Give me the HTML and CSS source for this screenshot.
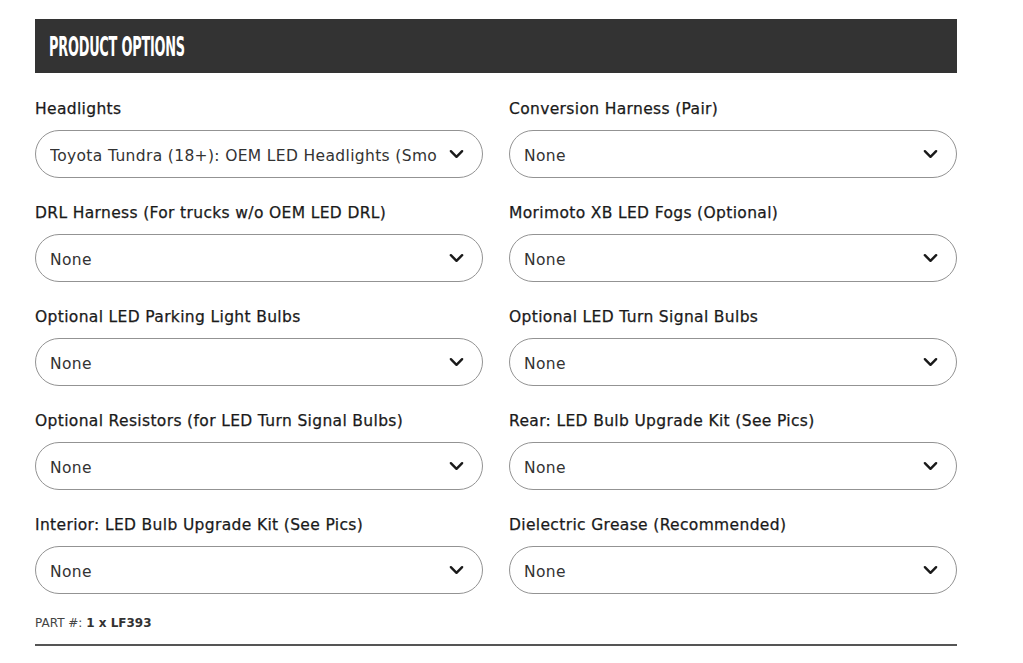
FILE: index.html
```
<!DOCTYPE html>
<html>
<head>
<meta charset="utf-8">
<link rel="stylesheet" href="styles.css">
</head>
<body>
<div class="wrap">
  <div class="header"><h2 class="title">PRODUCT OPTIONS</h2></div>
  <div class="grid">
    <div class="field"><div class="label">Headlights</div><div class="select"><span class="val">Toyota Tundra (18+): OEM LED Headlights (Smoke)</span><svg class="chev" viewBox="0 0 16 10"><path d="M2 2 L8 8 L14 2"/></svg></div></div>
    <div class="field"><div class="label">Conversion Harness (Pair)</div><div class="select"><span class="val">None</span><svg class="chev" viewBox="0 0 16 10"><path d="M2 2 L8 8 L14 2"/></svg></div></div>
    <div class="field"><div class="label">DRL Harness (For trucks w/o OEM LED DRL)</div><div class="select"><span class="val">None</span><svg class="chev" viewBox="0 0 16 10"><path d="M2 2 L8 8 L14 2"/></svg></div></div>
    <div class="field"><div class="label">Morimoto XB LED Fogs (Optional)</div><div class="select"><span class="val">None</span><svg class="chev" viewBox="0 0 16 10"><path d="M2 2 L8 8 L14 2"/></svg></div></div>
    <div class="field"><div class="label">Optional LED Parking Light Bulbs</div><div class="select"><span class="val">None</span><svg class="chev" viewBox="0 0 16 10"><path d="M2 2 L8 8 L14 2"/></svg></div></div>
    <div class="field"><div class="label">Optional LED Turn Signal Bulbs</div><div class="select"><span class="val">None</span><svg class="chev" viewBox="0 0 16 10"><path d="M2 2 L8 8 L14 2"/></svg></div></div>
    <div class="field"><div class="label">Optional Resistors (for LED Turn Signal Bulbs)</div><div class="select"><span class="val">None</span><svg class="chev" viewBox="0 0 16 10"><path d="M2 2 L8 8 L14 2"/></svg></div></div>
    <div class="field"><div class="label">Rear: LED Bulb Upgrade Kit (See Pics)</div><div class="select"><span class="val">None</span><svg class="chev" viewBox="0 0 16 10"><path d="M2 2 L8 8 L14 2"/></svg></div></div>
    <div class="field"><div class="label">Interior: LED Bulb Upgrade Kit (See Pics)</div><div class="select"><span class="val">None</span><svg class="chev" viewBox="0 0 16 10"><path d="M2 2 L8 8 L14 2"/></svg></div></div>
    <div class="field"><div class="label">Dielectric Grease (Recommended)</div><div class="select"><span class="val">None</span><svg class="chev" viewBox="0 0 16 10"><path d="M2 2 L8 8 L14 2"/></svg></div></div>
  </div>
  <div class="part">PART #: <b>1 x LF393</b></div>
  <div class="rule"></div>
</div>
</body>
</html>
```
FILE: styles.css
```
html, body { margin: 0; padding: 0; background: #fff; }
body { font-family: "DejaVu Sans", "Noto Sans", sans-serif; color: #1e1e1e; }
.wrap { width: 922px; margin-left: 35px; padding-top: 19px; }
.header { background: #333333; height: 54px; display: flex; align-items: center; padding-left: 14px; }
.title { margin: 0; color: #fff; font-family: "DejaVu Sans Condensed", "DejaVu Sans", sans-serif; font-weight: bold; font-size: 27px; letter-spacing: -0.4px; transform: scaleX(0.53); transform-origin: left center; white-space: nowrap; }
.grid { display: grid; grid-template-columns: 448px 448px; column-gap: 26px; row-gap: 25px; margin-top: 26px; }
.field { display: flex; flex-direction: column; }
.label { font-size: 15.5px; line-height: 20px; height: 20px; color: #1a1a1a; margin-bottom: 11px; white-space: nowrap; letter-spacing: 0.35px; -webkit-text-stroke: 0.25px #1a1a1a; }
.select { border: 1px solid #939393; border-radius: 24px; display: flex; align-items: center; padding: 3px 18px 0 14px; box-sizing: content-box; height: 43px; }
.val { flex: 1; font-size: 15.5px; color: #333; white-space: nowrap; overflow: hidden; margin-right: 12px; letter-spacing: 0.35px; }
.chev { width: 15px; height: 10px; fill: none; stroke: #1a1a1a; stroke-width: 2.6; stroke-linecap: round; stroke-linejoin: round; flex-shrink: 0; margin-top: -3px; }
.part { margin-top: 21px; font-size: 12px; line-height: 16px; color: #444; }
.part b { color: #333; }
.rule { margin-top: 13px; height: 2px; background: #555; }
```
